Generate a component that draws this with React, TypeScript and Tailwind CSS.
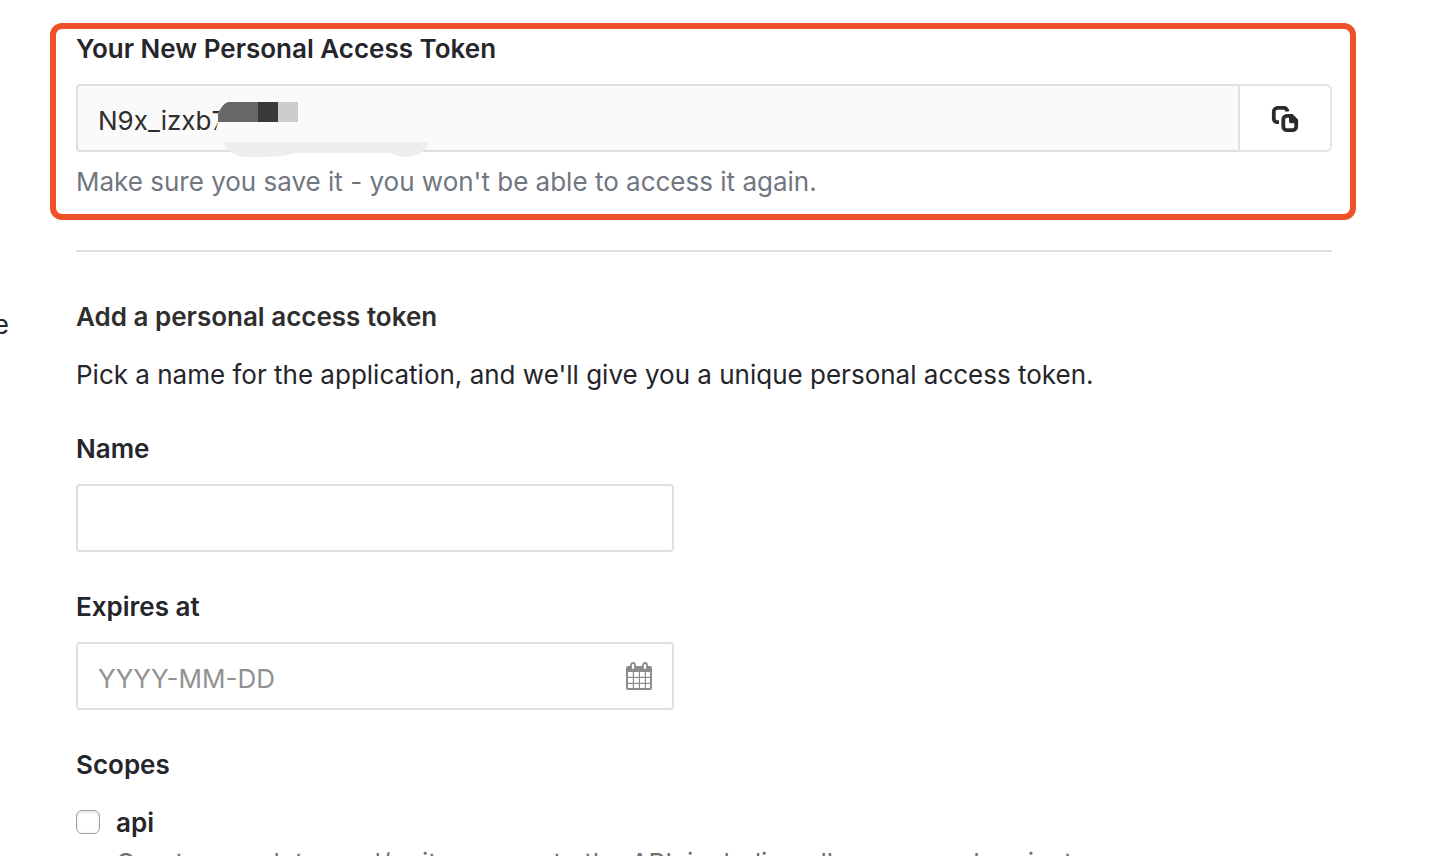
import type { ReactNode } from 'react';

function CopyIcon() {
  return (
    <svg viewBox="0 0 28 28" className="mt-0.5 size-7" fill="none" stroke="#2b2b2b" strokeWidth="3.8" aria-hidden="true">
      <path d="M16.500 6.500A4.200 4.200 0 0 0 13 2.900H6.500A3.700 3.700 0 0 0 2.800 6.600V13.500A3.700 3.700 0 0 0 6.500 17.200H8" />
      <path d="M16 10.800h4.500l4.700 4.700v6a3.700 3.700 0 0 1-3.700 3.700h-5.500a3.700 3.700 0 0 1-3.700-3.700v-7a3.700 3.700 0 0 1 3.700-3.700z" />
      <path d="M18 9.500h3.500l5 5V18.200h-6.500a2 2 0 0 1-2-2z" fill="#2b2b2b" stroke="none" />
    </svg>
  );
}

function CalendarIcon() {
  return (
    <svg viewBox="0 0 26 28" className="h-7 w-[26px]" aria-hidden="true">
      <rect x="0" y="4" width="26" height="24" rx="2" fill="#8c8c8c" />
      <g fill="#fff">
        {[2, 8, 14, 20].map((x) =>
          [10, 16, 22].map((y) => <rect key={`${x}-${y}`} x={x} y={y} width={x === 20 ? 4 : 4.800} height={y === 22 ? 4 : 4.800} />),
        )}
      </g>
      <rect x="5" y="1" width="4" height="7" rx="2" fill="#fff" stroke="#8c8c8c" strokeWidth="1.800" />
      <rect x="17" y="1" width="4" height="7" rx="2" fill="#fff" stroke="#8c8c8c" strokeWidth="1.800" />
    </svg>
  );
}

function Redaction() {
  return (
    <svg viewBox="0 0 216 64" className="pointer-events-none absolute top-4 left-[140px] z-10 h-16 w-[216px]" aria-hidden="true">
      <path d="M8 0H100V40H-3L2 22V14z" fill="#fafafa" />
      <path d="M2 22V14Q6 4 12 2H42V22z" fill="#686868" />
      <path d="M42 2H62V22H42z" fill="#3a3a3a" />
      <path d="M62 2H82V22H62z" fill="#cdcdcd" />
      <path d="M6 42H214Q206 57 190 57Q182 57 174 53H80Q66 57 50 57H28Q16 56 6 42z" fill="#eee" />
    </svg>
  );
}

function Label({ htmlFor, children }: { htmlFor: string; children: ReactNode }) {
  return (
    <label htmlFor={htmlFor} className="block font-semibold">
      {children}
    </label>
  );
}

const field = 'block h-[68px] w-full rounded border-2 border-[#dfdfdf] bg-white px-5 outline-none placeholder:text-[#919191]';

export default function App() {
  return (
    <div className="flex h-screen overflow-hidden bg-white font-['Inter',sans-serif] text-[26px] leading-10 text-[#24262b]">
      <aside className="flex w-[9px] shrink-0 justify-end overflow-hidden pt-[305px]">
        <p>e</p>
      </aside>

      <main className="min-w-0 flex-1 pt-[29px] pr-[102px] pl-[67px]">
        <section className="relative">
          <div className="pointer-events-none absolute -top-1.5 -right-6 -bottom-[18px] -left-[26px] rounded-xl border-6 border-[#ee5128]" />
          <Label htmlFor="token">Your New Personal Access Token</Label>
          <div className="relative mt-[15px] flex">
            <input
              id="token"
              readOnly
              defaultValue="N9x_izxb7"
              className="h-[68px] min-w-0 flex-1 rounded-l border-2 border-[#dfdfdf] bg-[#fafafa] px-5 pt-1 text-[#2e2e2e] outline-none"
            />
            <button
              type="button"
              aria-label="Copy personal access token"
              className="-ml-0.5 flex w-[94px] items-center justify-center rounded-r-md border-2 border-[#e3e3e3] bg-white"
            >
              <CopyIcon />
            </button>
            <Redaction />
          </div>
          <p className="mt-[10px] text-[#707780]">Make sure you save it - you won't be able to access it again.</p>
        </section>

        <hr className="mt-12 border-t-2 border-[#dfdfdf]" />

        <form className="mt-[45px]" onSubmit={(e) => e.preventDefault()}>
          <h2 className="font-semibold text-[#2e2e2e]">Add a personal access token</h2>
          <p className="mt-[18px]">Pick a name for the application, and we'll give you a unique personal access token.</p>

          <div className="mt-[34px] max-w-[598px]">
            <Label htmlFor="name">Name</Label>
            <div className="mt-[15px]">
              <input id="name" type="text" className={field} />
            </div>
          </div>

          <div className="mt-[35px] max-w-[598px]">
            <Label htmlFor="expires">Expires at</Label>
            <div className="relative mt-[15px]">
              <input id="expires" type="text" placeholder="YYYY-MM-DD" className={`${field} pt-1`} />
              <span className="pointer-events-none absolute top-5 right-[22px]">
                <CalendarIcon />
              </span>
            </div>
          </div>

          <fieldset className="mt-[35px]">
            <legend className="font-semibold">Scopes</legend>
            <div className="mt-[18px] flex gap-4">
              <input
                id="api"
                type="checkbox"
                className="mt-[7px] size-6 shrink-0 appearance-none rounded-md border border-[#a3a3a3] bg-white shadow-[inset_0_1px_3px_rgba(0,0,0,0.15)]"
              />
              <div>
                <Label htmlFor="api">api</Label>
                <p className="text-[#707070]">
                  Grants complete read/write access to the API, including all groups and projects.
                </p>
              </div>
            </div>
          </fieldset>
        </form>
      </main>
    </div>
  );
}
